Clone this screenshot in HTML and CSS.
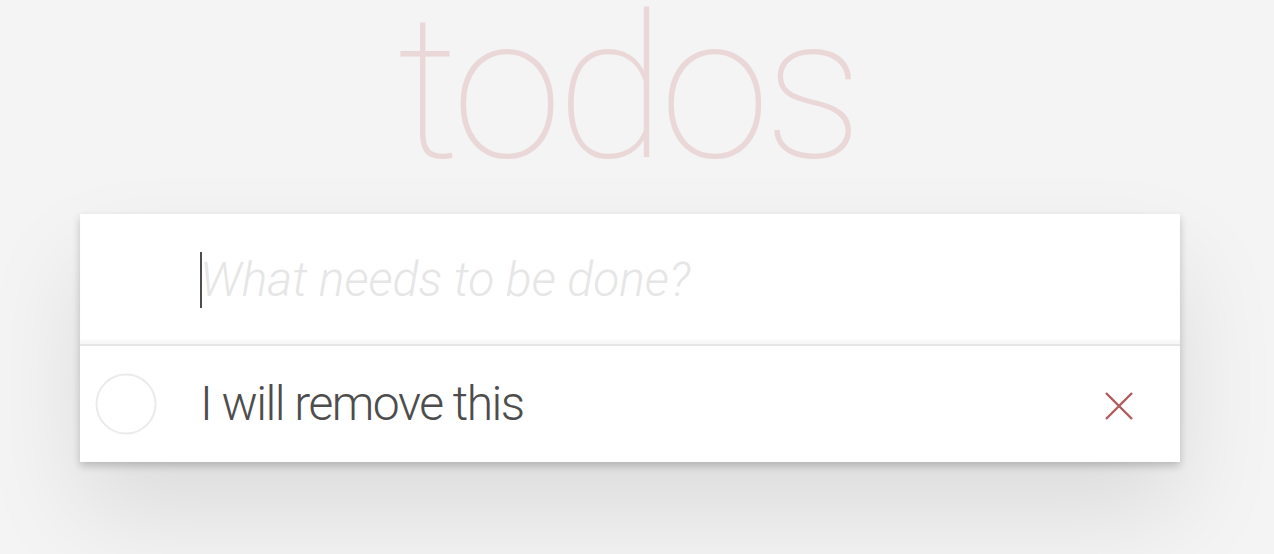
FILE: index.html
```html
<!DOCTYPE html>
<html lang="en">
<head>
<meta charset="utf-8">
<title>todos</title>
<link rel="stylesheet" href="styles.css">
</head>
<body>
<h1 class="title">todos</h1>
<section class="todoapp">
  <header class="header">
    <span class="caret"></span>
    <input class="new-todo" placeholder="What needs to be done?">
  </header>
  <section class="main">
    <ul class="todo-list">
      <li class="todo">
        <span class="toggle">
          <svg width="62" height="62" viewBox="0 0 62 62"><circle cx="31" cy="31" r="29.5" fill="none" stroke="#ebebeb" stroke-width="2"/></svg>
        </span>
        <label class="todo-label">I will remove this</label>
        <button class="destroy" aria-label="remove">
          <svg width="28" height="28" viewBox="0 0 28 28"><path d="M1 1 L27 27 M27 1 L1 27" stroke="#af5b5e" stroke-width="2.4" fill="none"/></svg>
        </button>
      </li>
    </ul>
  </section>
</section>
</body>
</html>
```
FILE: styles.css
```css
html, body {
  margin: 0;
  padding: 0;
}
body {
  background: #f4f4f4;
  font-family: "Roboto", "Liberation Sans", sans-serif;
  color: #4d4d4d;
  height: 554px;
  overflow: hidden;
}
.title {
  box-sizing: border-box;
  width: 1100px;
  margin: 0 0 0 80px;
  padding-right: 6px;
  height: 214px;
  font-size: 200px;
  line-height: 178px;
  font-weight: 100;
  text-align: center;
  color: #ead8d8;
  letter-spacing: -6px;
}
.todoapp {
  width: 1100px;
  margin: 0 0 0 80px;
  background: #fff;
  box-shadow: 0 4px 8px rgba(0,0,0,0.2), 0 50px 100px rgba(0,0,0,0.1);
}
.header {
  position: relative;
}
.new-todo {
  display: block;
  box-sizing: border-box;
  width: 100%;
  height: 130px;
  margin: 0;
  border: none;
  outline: none;
  padding: 0 32px 0 120px;
  font-family: inherit;
  font-size: 48px;
  font-weight: 300;
  color: #4d4d4d;
  background: #fff;
  box-shadow: inset 0 -4px 2px rgba(0,0,0,0.03);
  caret-color: transparent;
}
.new-todo::placeholder {
  font-style: italic;
  font-weight: 300;
  color: #e6e6e6;
}
.caret {
  position: absolute;
  left: 120px;
  top: 38px;
  width: 2px;
  height: 56px;
  background: #4d4d4d;
  z-index: 2;
}
.main {
  border-top: 2px solid #e6e6e6;
}
.todo-list {
  list-style: none;
  margin: 0;
  padding: 0;
}
.todo {
  display: flex;
  align-items: center;
  height: 116px;
}
.toggle {
  display: flex;
  width: 62px;
  height: 62px;
  margin-left: 15px;
}
.todo-label {
  flex: 1;
  margin-left: 43px;
  font-size: 48px;
  font-weight: 300;
  line-height: 58px;
  letter-spacing: -1.5px;
  color: #4d4d4d;
}
.destroy {
  display: flex;
  align-items: center;
  justify-content: center;
  width: 28px;
  height: 28px;
  padding: 0;
  margin: 3px 47px 0 0;
  border: none;
  background: none;
}
```
